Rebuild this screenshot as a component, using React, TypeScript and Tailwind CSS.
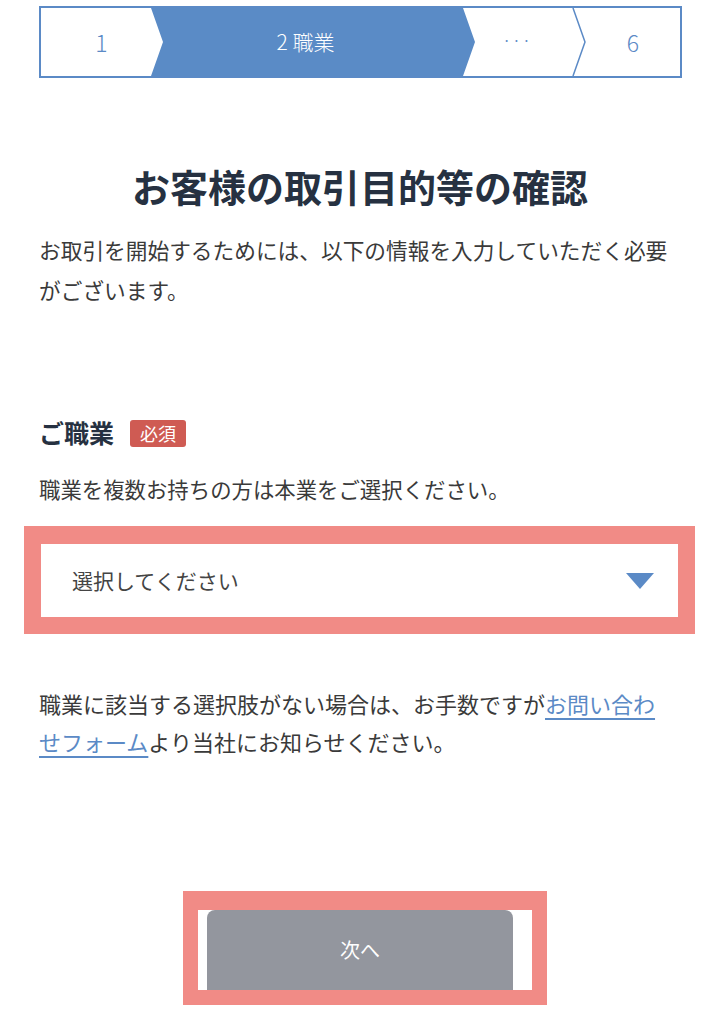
const jp = "font-['Noto_Sans_CJK_JP','Noto_Sans',sans-serif]";

function Stepper() {
  return (
    <div className="relative mx-auto mt-[6px] h-[72px] w-[643px] border-2 border-[#5b8ac6] bg-white">
      <svg
        className="absolute inset-0 h-full w-full"
        viewBox="0 0 639 68"
        preserveAspectRatio="none"
      >
        <polygon points="110,0 422,0 434,34 422,68 110,68 122,34" fill="#5a8bc6" />
        <polyline points="532,0 544,34 532,68" fill="none" stroke="#5b8ac6" strokeWidth="1.5" />
      </svg>
      <div className="relative flex h-full items-center text-[#5b8ac6]">
        <div className="flex w-[122px] justify-center text-[23px] font-light">1</div>
        <div className="flex w-[286px] justify-center text-[21px] font-light text-white">
          2 職業
        </div>
        <div className="flex w-[138px] justify-center pb-1 text-[14px] tracking-[2px]">···</div>
        <div className="flex flex-1 justify-center text-[23px] font-light">6</div>
      </div>
    </div>
  );
}

export default function App() {
  return (
    <div className={`min-h-[1024px] w-[720px] bg-white ${jp}`}>
      <Stepper />
      <div className="px-[39px]">
        <h1 className="mt-[84px] text-center text-[38px] font-bold leading-[48px] text-[#263141]">
          お客様の取引目的等の確認
        </h1>
        <p className="mt-[20px] text-[21.7px] leading-[40px] text-[#3a3a3a]">
          お取引を開始するためには、以下の情報を入力していただく必要
          <br />
          がございます。
        </p>

        <div className="mt-[105px] flex h-[36px] items-center gap-[16px]">
          <span className="text-[25px] font-bold text-[#263141]">ご職業</span>
          <span className="rounded-[3px] bg-[#cf5b53] px-[10px] py-[1px] text-[18px] leading-[25px] text-white">
            必須
          </span>
        </div>
        <p className="mt-[18px] text-[21.4px] leading-[40px] text-[#3a3a3a]">
          職業を複数お持ちの方は本業をご選択ください。
        </p>

        <div className="-ml-[15px] mt-[17px] w-[671px] border-x-[17px] border-t-[18px] border-b-[17px] border-[#f18b86]">
          <div className="flex h-[73px] items-center justify-between bg-white pl-[31px] pr-[24px]">
            <span className="text-[21px] text-[#444]">選択してください</span>
            <svg width="28" height="16" viewBox="0 0 28 16">
              <polygon points="0,0 28,0 14,16" fill="#5b8ac6" />
            </svg>
          </div>
        </div>

        <p className="mt-[50px] text-[22px] leading-[38px] text-[#3a3a3a]">
          職業に該当する選択肢がない場合は、お手数ですが
          <a href="#" className="text-[#5b8ac6] underline underline-offset-[5px]">
            お問い合わ
            <br />
            せフォーム
          </a>
          より当社にお知らせください。
        </p>

        <div className="ml-[144px] mt-[131px] w-[364px] border-x-[15px] border-t-[19px] border-b-[15px] border-[#f18b86]">
          <div className="h-[80px] bg-white pl-[9px]">
            <button
              type="button"
              className="flex h-[80px] w-[306px] items-center justify-center rounded-t-[8px] bg-[#93969e] text-[20px] text-white"
            >
              次へ
            </button>
          </div>
        </div>
      </div>
    </div>
  );
}
